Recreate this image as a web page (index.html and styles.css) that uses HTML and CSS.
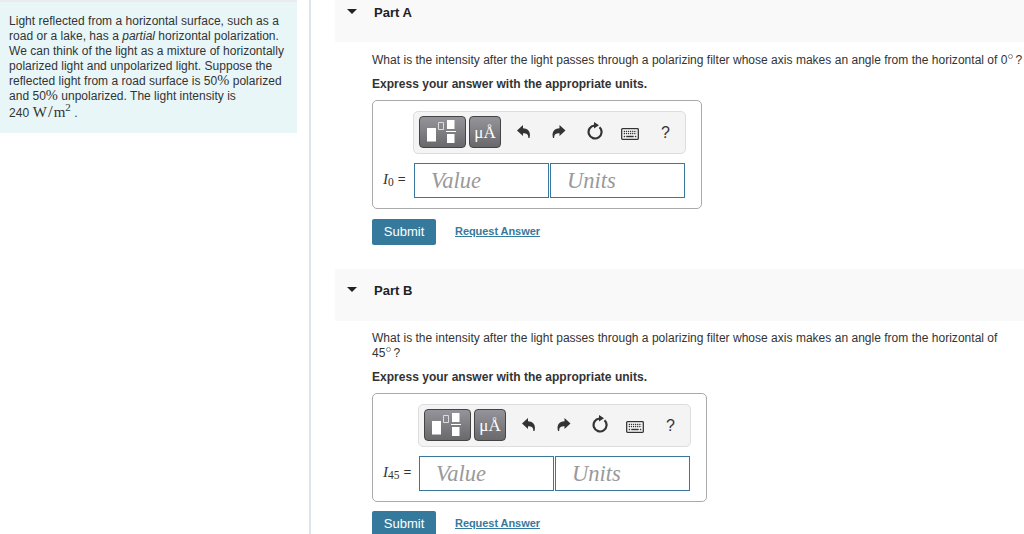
FILE: index.html
```html
<!DOCTYPE html>
<html>
	<head>
		<meta charset="utf-8">
		<title>Polarized light</title>
		<link rel="stylesheet" href="styles.css">
	</head>
	<body>
		<!-- icons used by both toolbars -->
		<svg class="sprite">
			<symbol id="template" viewBox="0 0 45 30">
				<path fill="#fff" d="M7 11h9v13.500H7zM27 3h7.500v9H27zM27 17h7.500v9H27zM26 14h10v1H26z" />
				<path fill="none" stroke="#ddd" d="M18.500 5.500h5v7h-5z" />
			</symbol>
			<symbol id="undo" viewBox="0 0 14 14">
				<path d="M0 5.500L6 0v3.200c5 .2 8.200 3.600 6.500 9.800h-1.200C11.500 9.500 10 8.200 6 8.200V11z" />
			</symbol>
			<symbol id="redo" viewBox="0 0 14 14">
				<path d="M13.500 5.500L7.500 0v3.200c-5 .2-8.200 3.600-6.500 9.800h1.200C2 9.500 3.500 8.200 7.500 8.200V11z" />
			</symbol>
			<symbol id="reset" viewBox="0 0 16 18">
				<path fill="none" stroke="#333" stroke-width="2.200" d="M12.500 5.200A6.500 6.500 0 1 1 7.500 3.500" />
				<path d="M7 0L12 3.300 7 6.600z" />
			</symbol>
			<symbol id="keyboard" viewBox="0 0 18 12">
				<rect x=".7" y=".7" width="16.600" height="10.600" rx=".8" fill="#fff" stroke="#333" stroke-width="1.300" />
				<path fill="none" stroke="#333" stroke-width="1.300" stroke-dasharray="1.300 .8" d="M2.700 3.500h12.800M2.700 5.700h12.800" />
				<path fill="none" stroke="#333" stroke-width="1.300" d="M2.700 8.500h1.500M5.200 8.500h7.500M13.800 8.500h1.500" />
			</symbol>
		</svg>

		<div class="page">
			<div class="left">
				<div class="intro">
					Light reflected from a horizontal surface, such as a<br>
					road or a lake, has a <i>partial</i> horizontal polarization.<br>
					We can think of the light as a mixture of horizontally<br>
					polarized light and unpolarized light. Suppose the<br>
					reflected light from a road surface is 50<span class="percent">%</span> polarized<br>
					and 50<span class="percent">%</span> unpolarized. The light intensity is<br>
					<span class="num">240</span> <span class="unit">W<span class="slash">/</span>m<sup>2</sup></span> .
				</div>
			</div>
			<div class="right">
				<div class="part partA">
					<div class="partTitle"><span class="arrow"></span>Part A</div>
					<div class="partBody">
						<p class="question">What is the intensity after the light passes through a polarizing filter whose axis makes an angle from the horizontal of 0<span class="degree"></span>?</p>
						<p class="hint">Express your answer with the appropriate units.</p>
						<div class="answer">
							<div class="label"><i>I</i><sub>0</sub><span class="equal">=</span></div>
							<div class="entry">
								<div class="toolbar">
									<span class="btn btnTemplate"><svg><use href="#template" /></svg></span>
									<span class="btn btnUnits">μÅ</span>
									<svg class="icon undo"><use href="#undo" /></svg>
									<svg class="icon redo"><use href="#redo" /></svg>
									<svg class="icon reset"><use href="#reset" /></svg>
									<svg class="icon keyboard"><use href="#keyboard" /></svg>
									<span class="help">?</span>
								</div>
								<div class="fields">
									<div class="field">Value</div>
									<div class="field">Units</div>
								</div>
							</div>
						</div>
						<div class="actions">
							<span class="submit">Submit</span>
							<a class="request" href="#">Request Answer</a>
						</div>
					</div>
				</div>
				<div class="part partB">
					<div class="partTitle"><span class="arrow"></span>Part B</div>
					<div class="partBody">
						<p class="question">What is the intensity after the light passes through a polarizing filter whose axis makes an angle from the horizontal of<br>45<span class="degree"></span>?</p>
						<p class="hint">Express your answer with the appropriate units.</p>
						<div class="answer">
							<div class="label"><i>I</i><sub>45</sub><span class="equal">=</span></div>
							<div class="entry">
								<div class="toolbar">
									<span class="btn btnTemplate"><svg><use href="#template" /></svg></span>
									<span class="btn btnUnits">μÅ</span>
									<svg class="icon undo"><use href="#undo" /></svg>
									<svg class="icon redo"><use href="#redo" /></svg>
									<svg class="icon reset"><use href="#reset" /></svg>
									<svg class="icon keyboard"><use href="#keyboard" /></svg>
									<span class="help">?</span>
								</div>
								<div class="fields">
									<div class="field">Value</div>
									<div class="field">Units</div>
								</div>
							</div>
						</div>
						<div class="actions">
							<span class="submit">Submit</span>
							<a class="request" href="#">Request Answer</a>
						</div>
					</div>
				</div>
			</div>
		</div>
	</body>
</html>
```
FILE: styles.css
```css
* {
	margin: 0;
	padding: 0;
	box-sizing: border-box;
}

html,
body {
	height: 100%;
	overflow: hidden;
}

body {
	font: 12px/15px "Liberation Sans", Arial, sans-serif;
	letter-spacing: .02px;
	color: #333;
	background-color: #fff;
}

.sprite {
	display: none;
}

.page {
	display: flex;
	height: 534px;
}

.left {
	flex: none;
	width: 311px;
	border-right: 2px solid #e0e4ee;
}

.intro {
	width: 297px;
	height: 133px;
	padding: 12px 0 0 9px;
	border-top: 2px solid #ebebed;
	background-color: #e9f6f8;
	white-space: nowrap;
}

.percent {
	font-family: "Liberation Serif", serif;
	font-size: 14.5px;
	line-height: 10px;
	letter-spacing: 0;
}

.num {
	letter-spacing: .1px;
}

.unit {
	font-family: "Liberation Serif", serif;
	font-size: 15px;
	line-height: 17px;
}

.unit .slash {
	font-size: 17px;
	line-height: 10px;
	margin: 0 1px;
}

.unit sup {
	font-size: 11px;
	line-height: 0;
}

.right {
	flex: 1;
	padding-left: 24px;
	overflow: hidden;
}

.partTitle {
	display: flex;
	height: 52px;
	padding: 14px 0 0 13px;
	font-size: 13px;
	font-weight: bold;
	background-color: #f9f9f9;
	color: #222;
}

.partA .partTitle {
	height: 42px;
	padding-top: 5px;
}

.arrow {
	width: 10px;
	height: 5px;
	margin: 4px 17px 0 -1px;
	background-color: #222;
	clip-path: polygon(0 0, 100% 0, 50% 100%);
}

.partBody {
	padding: 10px 0 0 37px;
}

.partA .partBody {
	padding-top: 11px;
}

.question {
	white-space: nowrap;
}

.degree {
	display: inline-block;
	width: 5px;
	height: 5px;
	margin: 0 2px 0 1px;
	border: 1px solid #888;
	border-radius: 50%;
	vertical-align: 5px;
}

.hint {
	margin-top: 9px;
	font-weight: bold;
}

.answer {
	display: flex;
	width: 330px;
	height: 109px;
	margin-top: 8px;
	padding: 10px 0 0 10px;
	border: 1px solid #aaa;
	border-radius: 5px;
}

.partB .answer {
	width: 335px;
}

.label {
	width: 30px;
	padding-top: 61px;
	font-family: "Liberation Serif", serif;
	font-size: 15px;
	white-space: nowrap;
	letter-spacing: 0;
}

.partB .label {
	width: 35px;
}

.label sub {
	font-size: 11.5px;
	line-height: 0;
	vertical-align: -2px;
}

.equal {
	margin-left: 4px;
	font-size: 14px;
	font-weight: bold;
}

.toolbar {
	display: flex;
	align-items: center;
	width: 273px;
	height: 43px;
	padding: 0 0 1px 5px;
	border: 1px solid #ddd;
	border-radius: 5px;
	background-color: #f4f4f4;
}

.btn {
	height: 32px;
	border: 1px solid #444;
	border-radius: 4px;
	background: linear-gradient(#94949a, #69696c);
	color: #fff;
}

.btnTemplate {
	width: 47px;
	margin-right: 3px;
}

.btnTemplate svg {
	display: block;
	width: 45px;
	height: 30px;
}

.btnUnits {
	width: 32px;
	font: 17px/32px "Liberation Serif", serif;
	letter-spacing: 0;
	text-align: center;
}

.icon {
	flex: none;
	fill: #333;
}

.undo {
	width: 14px;
	height: 14px;
	margin-left: 16px;
}

.redo {
	width: 14px;
	height: 14px;
	margin-left: 21px;
}

.reset {
	width: 16px;
	height: 18px;
	margin: 0 0 2px 21px;
}

.keyboard {
	width: 18px;
	height: 12px;
	margin: 3px 0 0 18px;
}

.help {
	margin-left: 22px;
	font-size: 16px;
}

.fields {
	display: flex;
	gap: 1px;
	margin: 9px 0 0 1px;
}

.field {
	width: 135px;
	height: 35px;
	padding-left: 16px;
	border: 1px solid #39789c;
	font: italic 22.5px/33px "Liberation Serif", serif;
	color: #999;
}

.actions {
	display: flex;
	align-items: center;
	margin: 10px 0 24px;
}

.partB .actions {
	margin-top: 9px;
}

.submit {
	width: 64px;
	height: 26px;
	border-radius: 2px;
	background-color: #357a9c;
	color: #fff;
	font-size: 13px;
	line-height: 26px;
	text-align: center;
}

.request {
	margin: -2px 0 0 19px;
	font-size: 11px;
	letter-spacing: -.06px;
	font-weight: bold;
	color: #357a9c;
}
```
